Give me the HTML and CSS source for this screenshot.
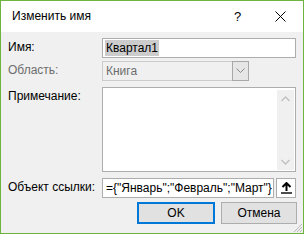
FILE: index.html
```html
<html lang="ru"><head>
    <meta charset="UTF-8">
    <meta name="viewport" content="width=device-width, initial-scale=1.0">
    <title>Изменить имя</title>
    <link rel="stylesheet" href="styles.css">
</head>
<body>
    <div class="window">
        <div class="titlebar">
            <span class="title">Изменить имя</span>
            <span class="help">?</span>
            <svg class="close" width="11" height="11" viewBox="0 0 11 11">
                <path d="M0.5 0.5 L10.5 10.5 M10.5 0.5 L0.5 10.5" stroke="#000" stroke-width="1" fill="none"/>
            </svg>
        </div>
        <div class="content">
            <div class="form">
                <label class="lbl">Имя:</label>
                <div class="textbox"><span class="sel">Квартал1</span></div>

                <label class="lbl lbl_off row2">Область:</label>
                <div class="combo row2">
                    <span class="combo_text">Книга</span>
                    <span class="combo_btn">
                        <svg width="9" height="6" viewBox="0 0 9 6"><path d="M0.5 0.5 L4.5 4.5 L8.5 0.5" stroke="#8a8a8a" fill="none"/></svg>
                    </span>
                </div>

                <label class="lbl row3">Примечание:</label>
                <div class="memo row3">
                    <div class="scroll">
                        <svg width="9" height="6" viewBox="0 0 9 6"><path d="M0.5 5 L4.5 1 L8.5 5" stroke="#c0c0c0" stroke-width="1.4" fill="none"/></svg>
                        <svg width="9" height="6" viewBox="0 0 9 6"><path d="M0.5 1 L4.5 5 L8.5 1" stroke="#c0c0c0" stroke-width="1.4" fill="none"/></svg>
                    </div>
                </div>

                <label class="lbl row4">Объект ссылки:</label>
                <div class="ref_row row4">
                    <div class="textbox ref">={"Январь";"Февраль";"Март"}</div>
                    <span class="collapse">
                        <svg width="11" height="12" viewBox="0 0 11 12">
                            <path d="M5.5 1 L5.5 9 M1.5 5 L5.5 1 L9.5 5" stroke="#000" stroke-width="2" fill="none"/>
                            <path d="M0 11 L11 11" stroke="#000" stroke-width="1.4"/>
                        </svg>
                    </span>
                </div>
            </div>
            <div class="buttons">
                <span class="btn btn_ok">OK</span>
                <span class="btn">Отмена</span>
            </div>
            <svg class="grip" width="11" height="11" viewBox="0 0 11 11">
                <path d="M10 2 L2 10 M10 5 L5 10 M10 8 L8 10" stroke="#b9b9b9" stroke-width="1" fill="none"/>
            </svg>
        </div>
    </div>
</body></html>
```

FILE: styles.css
```css
body {
    margin: 0;
    font-family: "Liberation Sans", Arial, sans-serif;
    font-size: 12px;
    color: #000;
}
.window {
    width: 304px;
    height: 234px;
    box-sizing: border-box;
    border: 1px solid #6fb33f;
    background: #f0f0f0;
    display: flex;
    flex-direction: column;
}
.titlebar {
    height: 31px;
    background: #fff;
    display: flex;
    align-items: center;
    padding-left: 11px;
    flex-shrink: 0;
}
.title {
    flex: 1;
    padding-bottom: 1px;
}
.help {
    width: 14px;
    margin-right: 27px;
    font-size: 13px;
}
.close {
    margin-right: 17px;
}
.content {
    flex: 1;
    position: relative;
    padding: 6px 6px 0 7px;
}
.form {
    display: grid;
    grid-template-columns: 94px 194px;
    align-items: start;
}
.row2 { margin-top: 3px; }
.row3 { margin-top: 6px; }
.row4 { margin-top: 6px; }
.lbl {
    line-height: 16px;
    padding-top: 1px;
}
.lbl_off { color: #6d6d6d; }
.textbox {
    box-sizing: border-box;
    height: 20px;
    background: #fff;
    border: 1px solid #adadad;
    padding: 0 2px;
    line-height: 18px;
    white-space: nowrap;
    overflow: hidden;
}
.sel {
    background: #cccccc;
    padding: 1px 1px;
}
.combo {
    box-sizing: border-box;
    width: 147px;
    height: 20px;
    border: 1px solid #cccccc;
    display: flex;
}
.combo_text {
    flex: 1;
    color: #6d6d6d;
    padding-left: 3px;
    line-height: 18px;
}
.combo_btn {
    width: 17px;
    box-sizing: border-box;
    border: 1px solid #a8a8a8;
    margin: -1px -1px -1px 0;
    height: 20px;
    background: #e6e6e6;
    display: flex;
    align-items: center;
    justify-content: center;
}
.memo {
    box-sizing: border-box;
    height: 85px;
    background: #fff;
    border: 1px solid #adadad;
    display: flex;
    justify-content: flex-end;
    padding: 2px 1px 1px 0;
}
.scroll {
    width: 17px;
    background: #f0f0f0;
    display: flex;
    flex-direction: column;
    justify-content: space-between;
    align-items: center;
    padding: 6px 0 5px;
}
.ref_row {
    display: flex;
    gap: 2px;
}
.ref {
    flex: 1;
    padding-left: 3px;
}
.collapse {
    width: 20px;
    height: 20px;
    box-sizing: border-box;
    border: 1px solid #adadad;
    background: #fff;
    display: flex;
    align-items: center;
    justify-content: center;
}
.buttons {
    display: flex;
    justify-content: flex-end;
    gap: 6px;
    margin-top: 4px;
}
.btn {
    box-sizing: border-box;
    width: 76px;
    height: 22px;
    background: #e1e1e1;
    border: 1px solid #adadad;
    text-align: center;
    line-height: 20px;
}
.btn_ok {
    width: 78px;
    border: 2px solid #0078d7;
    line-height: 18px;
}
.grip {
    position: absolute;
    right: 0;
    bottom: 0;
}
```
